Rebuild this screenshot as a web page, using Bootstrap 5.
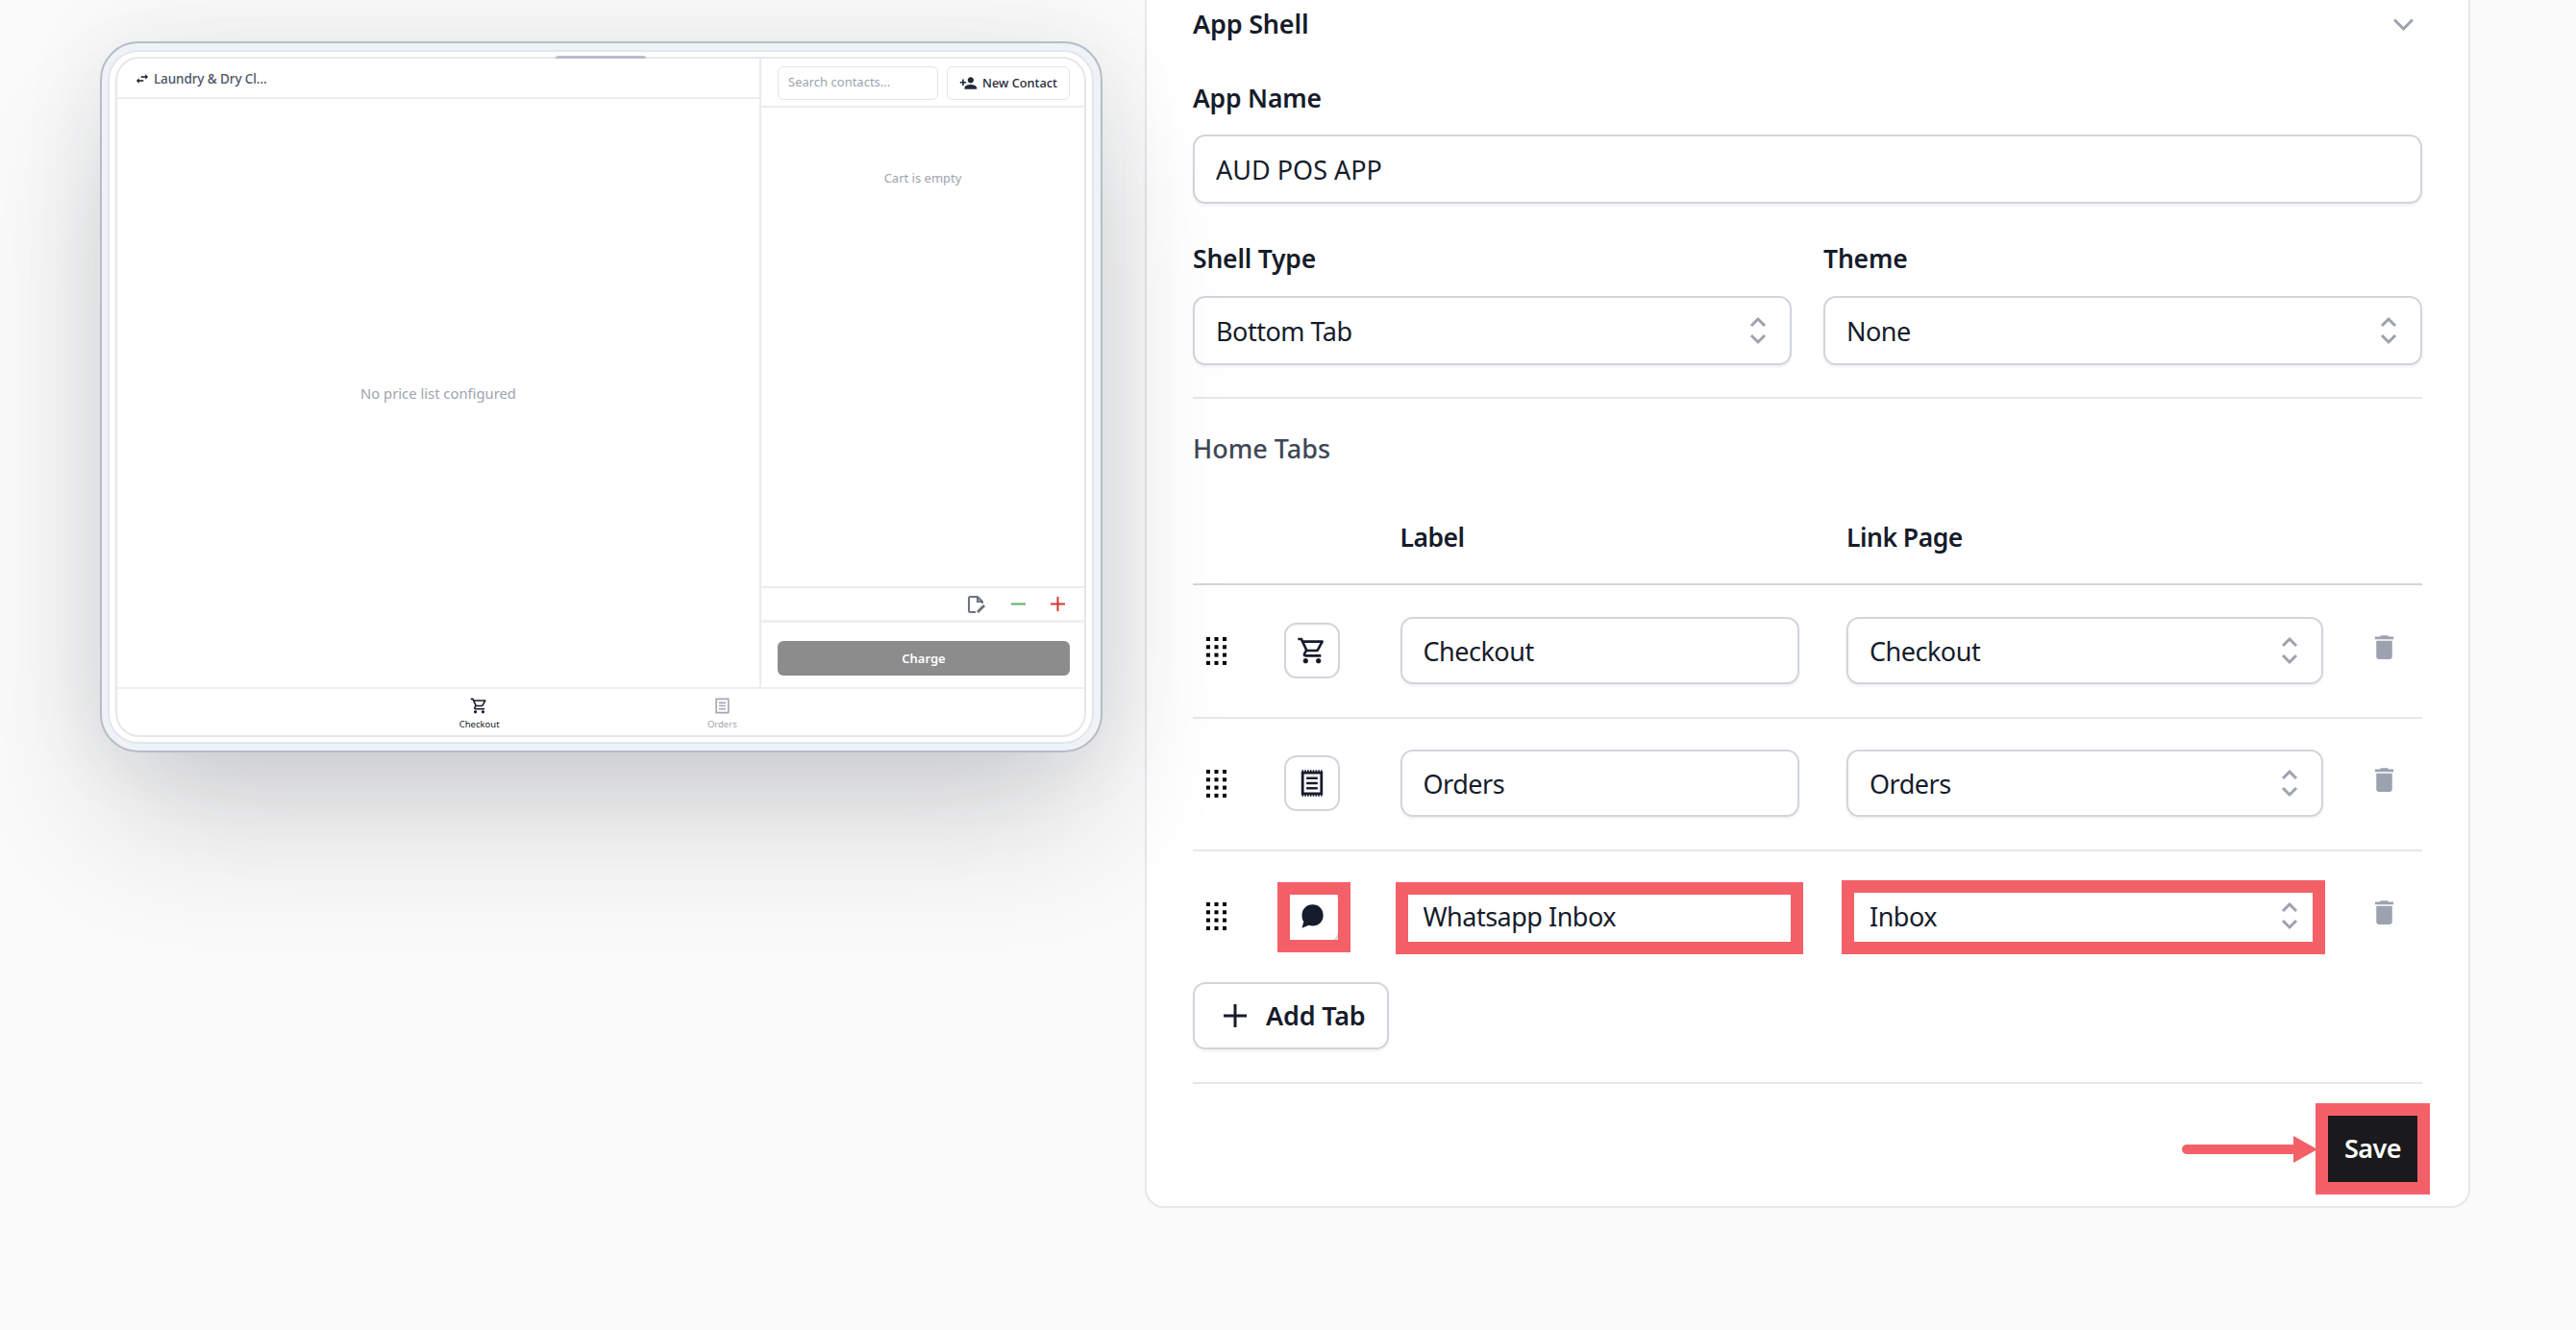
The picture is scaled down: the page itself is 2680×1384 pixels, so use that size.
<!DOCTYPE html>
<html lang="en">
<head>
  <meta charset="UTF-8" />
  <title>App Shell</title>
  <link href="https://cdn.jsdelivr.net/npm/bootstrap@5.3.0/dist/css/bootstrap.min.css" rel="stylesheet" />
  <style>
    html, body {
      height: 100%;
      overflow: hidden;
    }
    body {
      background-color: #fafafa;
      font-family: "Noto Sans", sans-serif;
      color: #161c2b;
    }
    .page-wrap {
      height: 1384px;
    }

    /* left: device preview */
    .preview-col {
      width: 1191px;
      flex: none;
      padding: 43px 0 0 104px;
      position: relative;
      z-index: 1;
      pointer-events: none;
    }
    .device-frame {
      position: relative;
      width: 1043px;
      height: 740px;
      padding: 7px 7px 7px 6px;
      background-color: #eff2f6;
      border: 2px solid #b6bdc9;
      border-radius: 40px;
      box-shadow: 0 80px 150px -20px rgba(30, 35, 45, .2), 0 0 90px rgba(30, 35, 45, .08);
    }
    .device-ring {
      height: 100%;
      padding: 5px 6px;
      background-color: #fff;
      border: 2px solid #e2e6ee;
      border-radius: 32px;
    }
    .device-screen {
      height: 100%;
      background-color: #fff;
      border: 2px solid #e5e7eb;
      border-radius: 25px;
      overflow: hidden;
    }
    .device-notch {
      position: absolute;
      top: 13px;
      left: 472px;
      width: 94px;
      height: 3px;
      background-color: #b6bdc9;
      border-radius: 3px 3px 0 0;
    }
    .pos-left {
      width: 670px;
      flex: none;
      border-right: 2px solid #e9ebef;
    }
    .pos-left-head {
      height: 42px;
      padding-left: 18px;
      padding-top: 2px;
      border-bottom: 2px solid #eceef1;
      font-size: 13.5px;
      font-weight: 500;
      color: #4b5563;
    }
    .pos-left-head span {
      letter-spacing: -.1px;
    }
    .pos-empty {
      font-size: 14.8px;
      color: #9ca3af;
    }
    .pos-right-head {
      height: 51px;
      padding: 8px 14px 0 17px;
      gap: 9px;
      border-bottom: 2px solid #e9ebef;
    }
    .mini-search {
      width: 167px;
      height: 35px;
      padding: 0 10px;
      font-size: 13px;
      line-height: 31px;
      color: #9ca3af;
      background-color: #fff;
      border: 1.5px solid #e0e3e8;
      border-radius: 6px;
    }
    .mini-btn {
      width: 128px;
      height: 35px;
      gap: 5px;
      font-size: 12.8px;
      font-weight: 500;
      color: #1f2937;
      background-color: #fff;
      border: 1.5px solid #e0e3e8;
      border-radius: 6px;
    }
    .cart-note {
      padding-top: 64px;
      font-size: 13px;
      color: #9ca3af;
      text-align: center;
    }
    .cart-tools {
      height: 38px;
      padding-right: 20px;
      gap: 26px;
      border-top: 2px solid #e9ebef;
      border-bottom: 3px solid #eef0f3;
    }
    .charge-wrap {
      height: 67px;
      padding: 19px 15px 0 17px;
    }
    .charge-btn {
      height: 36px;
      font-size: 13px;
      font-weight: 600;
      line-height: 36px;
      color: #fff;
      text-align: center;
      background-color: #8c8c8d;
      border-radius: 6px;
    }
    .pos-tabs {
      height: 50px;
      flex: none;
      padding-top: 8px;
      border-top: 2px solid #eceef1;
    }
    .pos-tab {
      width: 252.6px;
      font-size: 9.5px;
      line-height: 13px;
      color: #9ca3af;
    }
    .pos-tab svg {
      margin-bottom: 3px;
    }
    .pos-tab.on {
      color: #111827;
    }

    /* right: settings card */
    .settings-card {
      width: 1379px;
      height: 1299px;
      flex: none;
      margin-top: -42px;
      padding: 40px 48px 0 48px;
      background-color: #fff;
      border: 2px solid #e5e7eb;
      border-radius: 20px;
    }
    .shell-head {
      height: 50px;
      font-size: 27px;
      font-weight: 600;
      letter-spacing: -.2px;
      padding-right: 9px;
    }
    .fld-label {
      display: block;
      height: 40px;
      margin-bottom: 18px;
      font-size: 26.5px;
      font-weight: 600;
      line-height: 40px;
      letter-spacing: -.2px;
    }
    .fld {
      height: 72px;
      padding: 0 22px;
      font-size: 27px;
      color: #161c2b;
      letter-spacing: -.5px;
      background-color: #fff;
      border: 2px solid #d1d5db;
      border-radius: 13px;
      box-shadow: 0 2px 3px rgba(0, 0, 0, .06);
    }
    .fld-caps {
      letter-spacing: 0;
    }
    .fld.form-select {
      padding-top: 2px;
      background-image: url("data:image/svg+xml,%3csvg xmlns='http://www.w3.org/2000/svg' viewBox='0 0 18 30'%3e%3cpath fill='none' stroke='%239ca3af' stroke-width='3' d='M2 10l7-7 7 7M2 20l7 7 7-7'/%3e%3c/svg%3e");
      background-position: right 24px center;
      background-size: 18px 30px;
    }
    .row-ctl {
      height: 70px;
    }
    .fld-gap-name {
      margin-top: 37px;
    }
    .fld-gap-name .fld-label {
      margin-bottom: 19px;
    }
    .fld-pair {
      gap: 33px;
    }
    .fld-pair > div {
      width: 623px;
    }
    .rule-line {
      height: 2px;
      background-color: #e5e7eb;
    }
    .rule-a {
      margin-top: 33px;
    }
    .tabs-title {
      height: 40px;
      margin-top: 32px;
      font-size: 27px;
      font-weight: 500;
      line-height: 40px;
      letter-spacing: 0;
      color: #3f4856;
    }
    .tab-grid {
      display: grid;
      grid-template-columns: 95px 120.5px 415px 49.5px 495.5px 1fr;
      align-items: center;
    }
    .tab-head {
      margin-top: 53px;
      height: 69px;
      padding-bottom: 27px;
      border-bottom: 2px solid #d1d5db;
      font-size: 26.5px;
      font-weight: 600;
      letter-spacing: -.5px;
    }
    .tab-row {
      padding: 32px 0 34px;
      border-bottom: 2px solid #e5e7eb;
    }
    .tab-row:first-of-type {
      padding-top: 33px;
    }
    .tab-row.last-row {
      padding-bottom: 0;
      border-bottom: 0;
    }
    .tab-grip {
      padding-left: 14px;
      line-height: 0;
    }
    .icon-pick {
      width: 58px;
      height: 58px;
      background-color: #fff;
      border: 2px solid #d1d5db;
      border-radius: 13px;
    }
    .tab-trash {
      padding-left: 47px;
      margin-top: -8px;
    }
    .add-tab {
      width: 204px;
      height: 70px;
      margin-top: 34px;
      gap: 20px;
      padding-left: 30px;
      font-size: 27px;
      font-weight: 600;
      letter-spacing: -.2px;
      color: #161c2b;
      background-color: #fff;
      border: 2px solid #d1d5db;
      border-radius: 13px;
      box-shadow: 0 2px 3px rgba(0, 0, 0, .06);
    }
    .rule-b {
      margin-top: 34px;
    }
    .save-bar {
      margin-top: 20px;
      margin-right: -8px;
    }
    .save-btn {
      width: 119px;
      height: 95px;
      font-size: 27px;
      font-weight: 600;
      letter-spacing: -.5px;
      color: #fff;
      background-color: #1a1a1c;
      border: 13px solid #f46067;
    }
    .save-arrow {
      margin-right: -2px;
    }

    /* red annotation boxes over the new row */
    .callout-host {
      position: relative;
    }
    .callout {
      position: absolute;
      border: 13px solid #f46067;
      pointer-events: none;
    }
    .callout-icon {
      top: -6px;
      height: 73px;
      left: -7px;
      width: 76px;
    }
    .callout-name {
      top: 0;
      bottom: -5px;
      left: -5px;
      right: -4px;
    }
    .callout-link {
      top: -2px;
      bottom: -5px;
      left: -5px;
      right: -2px;
    }
  </style>
</head>
<body>
  <div class="page-wrap d-flex">

    <div class="preview-col">
      <div class="device-frame">
        <div class="device-notch"></div>
        <div class="device-ring">
          <div class="device-screen d-flex flex-column">
            <div class="d-flex flex-grow-1">
              <div class="pos-left d-flex flex-column">
                <div class="pos-left-head d-flex align-items-center gap-1">
                  <svg width="16" height="16" viewBox="0 0 24 24" fill="#111827"><path d="M6.99 11L3 15l3.99 4v-3H14v-2H6.99v-3zM21 9l-3.99-4v3H10v2h7.01v3L21 9z"/></svg>
                  <span>Laundry &amp; Dry Cl...</span>
                </div>
                <div class="pos-empty flex-grow-1 d-flex align-items-center justify-content-center">No price list configured</div>
              </div>
              <div class="flex-grow-1 d-flex flex-column">
                <div class="pos-right-head d-flex">
                  <div class="mini-search">Search contacts...</div>
                  <div class="mini-btn d-flex align-items-center justify-content-center">
                    <svg width="19" height="19" viewBox="0 0 24 24" fill="#1f2937"><path d="M15 12c2.21 0 4-1.79 4-4s-1.79-4-4-4-4 1.79-4 4 1.79 4 4 4zm-9-2V7H4v3H1v2h3v3h2v-3h3v-2H6zm9 4c-2.67 0-8 1.34-8 4v2h16v-2c0-2.66-5.33-4-8-4z"/></svg>
                    New Contact
                  </div>
                </div>
                <div class="cart-note flex-grow-1">Cart is empty</div>
                <div class="cart-tools d-flex align-items-center justify-content-end">
                  <svg width="20" height="20" viewBox="0 0 20 20" fill="none" stroke="#6b7280" stroke-width="2"><path d="M9 18H3.500A1.500 1.500 0 0 1 2 16.500V3.500A1.500 1.500 0 0 1 3.500 2H11l5 5v2"/><path d="M11 2v5h5"/><path d="M11 18l7-7" stroke-width="3"/></svg>
                  <svg width="15" height="15" viewBox="0 0 15 15" fill="none" stroke="#5cb465" stroke-width="2"><path d="M0 7.500h15"/></svg>
                  <svg width="15" height="15" viewBox="0 0 15 15" fill="none" stroke="#cf3a32" stroke-width="2"><path d="M0 7.500h15M7.500 0v15"/></svg>
                </div>
                <div class="charge-wrap">
                  <div class="charge-btn">Charge</div>
                </div>
              </div>
            </div>
            <div class="pos-tabs d-flex justify-content-center">
              <div class="pos-tab on d-flex flex-column align-items-center">
                <svg width="19" height="19" viewBox="0 0 24 24" fill="#111827"><path d="M15.550 13c.75 0 1.410-.41 1.750-1.030l3.580-6.490c.37-.66-.11-1.480-.87-1.480H5.210l-.94-2H1v2h2l3.600 7.590-1.350 2.440C4.520 15.370 5.480 17 7 17h12v-2H7l1.100-2h7.450zM6.160 6h12.150l-2.760 5H8.530L6.160 6zM7 18c-1.100 0-1.990.9-1.990 2S5.900 22 7 22s2-.9 2-2-.9-2-2-2zm10 0c-1.100 0-1.990.9-1.990 2s.89 2 1.990 2 2-.9 2-2-.9-2-2-2z"/></svg>
                Checkout
              </div>
              <div class="pos-tab d-flex flex-column align-items-center">
                <svg width="19" height="19" viewBox="0 0 24 24" fill="none" stroke="#a3a8b2" stroke-width="2"><path d="M4 3h16v18H4z"/><path d="M7.500 8h9M7.500 12h9M7.500 16h9"/></svg>
                Orders
              </div>
            </div>
          </div>
        </div>
      </div>
    </div>

    <div class="settings-card">
      <div class="shell-head d-flex align-items-center justify-content-between">
        <span>App Shell</span>
        <svg width="21" height="13" viewBox="0 0 21 13" fill="none" stroke="#9ca3af" stroke-width="3"><path d="M1 1.500l9.500 9.500L20 1.500"/></svg>
      </div>

      <div class="mt-4 pt-2">
        <label class="fld-label">App Name</label>
        <input class="form-control fld fld-caps" type="text" value="AUD POS APP" />
      </div>

      <div class="fld-pair fld-gap-name d-flex">
        <div>
          <label class="fld-label">Shell Type</label>
          <select class="form-select fld"><option>Bottom Tab</option></select>
        </div>
        <div>
          <label class="fld-label">Theme</label>
          <select class="form-select fld"><option>None</option></select>
        </div>
      </div>

      <div class="rule-line rule-a"></div>
      <div class="tabs-title">Home Tabs</div>

      <div class="tab-grid tab-head">
        <div></div>
        <div></div>
        <div>Label</div>
        <div></div>
        <div>Link Page</div>
        <div></div>
      </div>

      <div id="tabRows"></div>

      <button class="add-tab btn d-flex align-items-center" type="button">
        <svg width="24" height="24" viewBox="0 0 24 24" fill="none" stroke="#161c2b" stroke-width="3"><path d="M0 12h24M12 0v24"/></svg>
        Add Tab
      </button>

      <div class="rule-line rule-b"></div>

      <div class="save-bar d-flex justify-content-end align-items-center">
        <svg class="save-arrow" width="141" height="28" viewBox="0 0 141 28" fill="#f46067"><rect x="0" y="9" width="120" height="10" rx="5"/><path d="M116 0l25 14-25 14z"/></svg>
        <button class="save-btn btn rounded-0 p-0" type="button">Save</button>
      </div>
    </div>
  </div>

  <script src="https://cdn.jsdelivr.net/npm/bootstrap@5.3.0/dist/js/bootstrap.bundle.min.js"></script>
  <script>
    const cartIcon = '<path d="M15.550 13c.75 0 1.410-.41 1.750-1.030l3.580-6.490c.37-.66-.11-1.480-.87-1.480H5.210l-.94-2H1v2h2l3.600 7.590-1.350 2.440C4.520 15.370 5.480 17 7 17h12v-2H7l1.100-2h7.450zM6.160 6h12.150l-2.760 5H8.530L6.160 6zM7 18c-1.100 0-1.990.9-1.990 2S5.900 22 7 22s2-.9 2-2-.9-2-2-2zm10 0c-1.100 0-1.990.9-1.990 2s.89 2 1.990 2 2-.9 2-2-.9-2-2-2z"/>';
    const ordersIcon = '<path fill="none" stroke="#161c2b" stroke-width="2.400" d="M3.600 2.600h16.800v18.800H3.600z"/><path fill="none" stroke="#161c2b" stroke-width="1.400" stroke-dasharray="1.400 1" d="M3 1h18M3 23h18"/><path fill="none" stroke="#161c2b" stroke-width="2.200" d="M7 7.500h10M7 12h10M7 16.500h10"/>';
    const chatIcon = '<path d="M12.500 2c5.500 0 9.500 4 9.500 9.500S18 21 12.500 21c-1.200 0-2.300-.2-3.300-.6L3 23l1.600-5.800C3.400 15.600 3 13.600 3 11.500 3 6 7 2 12.500 2z"/>';

    const tabs = [
      { label: "Checkout", page: "Checkout", icon: cartIcon, size: 32 },
      { label: "Orders", page: "Orders", icon: ordersIcon, size: 28 },
      { label: "Whatsapp Inbox", page: "Inbox", icon: chatIcon, size: 28, isNew: true }
    ];

    function gripDots() {
      let dots = "";
      for (let r = 0; r < 4; r++) {
        for (let c = 0; c < 3; c++) {
          dots += `<rect x="${c * 8.500}" y="${r * 8.300}" width="4" height="4"/>`;
        }
      }
      return `<svg width="21" height="29" viewBox="0 0 21 29" fill="#000">${dots}</svg>`;
    }

    const rowsEl = document.getElementById("tabRows");
    tabs.forEach((t, i) => {
      const row = document.createElement("div");
      row.className = "tab-grid tab-row" + (t.isNew ? " last-row" : "");
      row.innerHTML = `
        <div class="tab-grip">${gripDots()}</div>
        <div class="callout-host">
          <div class="icon-pick d-flex align-items-center justify-content-center">
            <svg width="${t.size}" height="${t.size}" viewBox="0 0 24 24" fill="#161c2b">${t.icon}</svg>
          </div>
          ${t.isNew ? '<div class="callout callout-icon"></div>' : ""}
        </div>
        <div class="callout-host">
          <input class="form-control fld row-ctl" type="text" value="${t.label}" />
          ${t.isNew ? '<div class="callout callout-name"></div>' : ""}
        </div>
        <div></div>
        <div class="callout-host">
          <select class="form-select fld row-ctl"><option>${t.page}</option></select>
          ${t.isNew ? '<div class="callout callout-link"></div>' : ""}
        </div>
        <div class="tab-trash">
          <svg width="33" height="33" viewBox="0 0 24 24" fill="#9ca3af"><path d="M6 19c0 1.100.9 2 2 2h8c1.100 0 2-.9 2-2V7H6v12zM19 4h-3.500l-1-1h-5l-1 1H5v2h14V4z"/></svg>
        </div>`;
      rowsEl.appendChild(row);
    });
  </script>
</body>
</html>
